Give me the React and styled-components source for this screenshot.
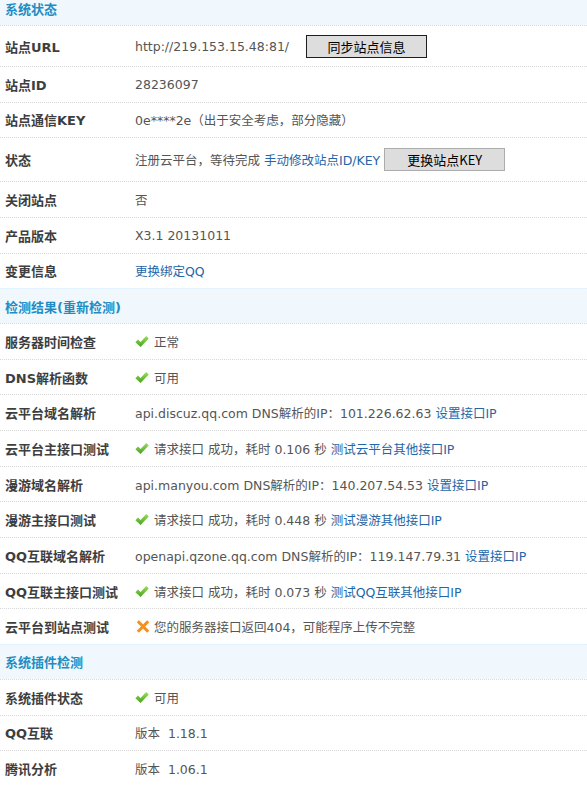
import React from "react";
import styled, { createGlobalStyle } from "styled-components";

const GlobalStyle = createGlobalStyle`
  * { margin:0; padding:0; box-sizing:border-box; }
  body {
    background:#fff;
    font-family:"DejaVu Sans", "Noto Sans CJK SC", sans-serif;
    font-size:12.5px;
    color:#555;
  }
`;

const Page = styled.div`
  width:587px;
  margin-top:-10px;
`;

const Section = styled.div`
  display:flex;
  align-items:center;
  height:35px;
  padding-left:5px;
  background:#f0f7fd;
  border-top:1px dotted #deeffb;
  color:#1f8dc3;
  font-weight:bold;
  font-size:13px;
`;

const Row = styled.div`
  display:grid;
  grid-template-columns:130px 1fr;
  align-items:center;
  height:${p => p.$h || 35.65}px;
  padding-left:5px;
  border-top:1px dotted #d8d8d8;
`;

const Label = styled.div`
  font-weight:bold;
  font-size:13px;
  color:#3e3e3e;
  white-space:nowrap;
`;

const Value = styled.div`
  display:flex;
  align-items:center;
  white-space:pre;
`;

const Link = styled.a`
  color:#2366a8;
  text-decoration:none;
`;

const Btn = styled.button`
  width:121px;
  height:23px;
  margin-left:${p => p.$gap}px;
  font-family:"Noto Sans CJK SC", sans-serif;
  font-size:13px;
  color:#000;
  background:#dddddd;
  border:1px solid ${p => (p.$dark ? "#1e1e1e" : "#acacac")};
`;

const IconBox = styled.span`
  display:inline-flex;
  width:19px;
  padding-right:5px;
  justify-content:flex-start;
`;

function StatusIcon({ ok }) {
  return (
    <IconBox>
      {ok ? (
        <svg width="15" height="13" viewBox="0 0 15 13">
          <defs>
            <linearGradient id="ck" x1="0" y1="0" x2="0" y2="1">
              <stop offset="0" stopColor="#9ddf5c" />
              <stop offset="1" stopColor="#45a11f" />
            </linearGradient>
          </defs>
          <path d="M0.4 7.2 L3.2 4.3 L6 7 L12 0.6 L14.7 3.4 L6 12.4 Z" fill="url(#ck)" />
        </svg>
      ) : (
        <svg width="13" height="13" viewBox="0 0 13 13" style={{ marginLeft: 2 }}>
          <path d="M2 2 L11 11 M11 2 L2 11" stroke="#f4901c" strokeWidth="3.2" strokeLinecap="square" />
        </svg>
      )}
    </IconBox>
  );
}

const Ok = ({ children }) => (
  <>
    <StatusIcon ok />
    {children}
  </>
);

const systemRows = [
  {
    label: "站点URL",
    h: 41,
    value: (
      <>
        http://219.153.15.48:81/
        <Btn $dark $gap={17}>同步站点信息</Btn>
      </>
    ),
  },
  { label: "站点ID", value: "28236097" },
  { label: "站点通信KEY", value: "0e****2e（出于安全考虑，部分隐藏）" },
  {
    label: "状态",
    h: 44,
    value: (
      <>
        注册云平台，等待完成 <Link href="#">手动修改站点ID/KEY</Link>
        <Btn $gap={4}>更换站点KEY</Btn>
      </>
    ),
  },
  { label: "关闭站点", value: "否" },
  { label: "产品版本", value: "X3.1 20131011" },
  { label: "变更信息", value: <Link href="#">更换绑定QQ</Link> },
];

const checkRows = [
  { label: "服务器时间检查", value: <Ok>正常</Ok> },
  { label: "DNS解析函数", value: <Ok>可用</Ok> },
  {
    label: "云平台域名解析",
    value: <>api.discuz.qq.com DNS解析的IP：101.226.62.63 <Link href="#">设置接口IP</Link></>,
  },
  {
    label: "云平台主接口测试",
    value: <Ok>请求接口 成功，耗时 0.106 秒 <Link href="#">测试云平台其他接口IP</Link></Ok>,
  },
  {
    label: "漫游域名解析",
    value: <>api.manyou.com DNS解析的IP：140.207.54.53 <Link href="#">设置接口IP</Link></>,
  },
  {
    label: "漫游主接口测试",
    value: <Ok>请求接口 成功，耗时 0.448 秒 <Link href="#">测试漫游其他接口IP</Link></Ok>,
  },
  {
    label: "QQ互联域名解析",
    value: <>openapi.qzone.qq.com DNS解析的IP：119.147.79.31 <Link href="#">设置接口IP</Link></>,
  },
  {
    label: "QQ互联主接口测试",
    value: <Ok>请求接口 成功，耗时 0.073 秒 <Link href="#">测试QQ互联其他接口IP</Link></Ok>,
  },
  {
    label: "云平台到站点测试",
    value: <><StatusIcon />您的服务器接口返回404，可能程序上传不完整</>,
  },
];

const pluginRows = [
  { label: "系统插件状态", value: <Ok>可用</Ok> },
  { label: "QQ互联", value: "版本  1.18.1" },
  { label: "腾讯分析", value: "版本  1.06.1" },
];

function Rows({ items }) {
  return items.map(r => (
    <Row key={r.label} $h={r.h}>
      <Label>{r.label}</Label>
      <Value>{r.value}</Value>
    </Row>
  ));
}

export default function App() {
  return (
    <Page>
      <GlobalStyle />
      <Section>系统状态</Section>
      <Rows items={systemRows} />
      <Section>检测结果(重新检测)</Section>
      <Rows items={checkRows} />
      <Section>系统插件检测</Section>
      <Rows items={pluginRows} />
    </Page>
  );
}
